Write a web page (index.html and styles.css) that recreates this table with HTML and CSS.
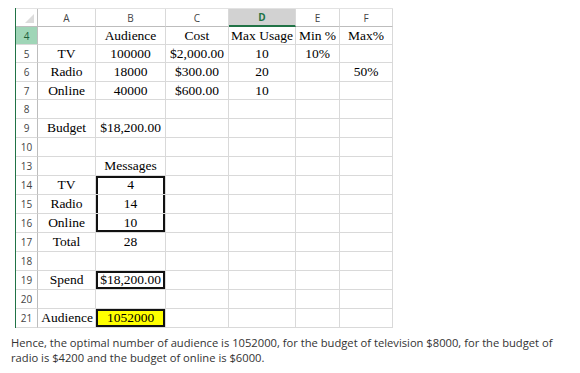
FILE: index.html
```html
<!DOCTYPE html>
<html>
<head>
<meta charset="utf-8">
<link rel="stylesheet" href="styles.css">
</head>
<body>
<div class="sheet">
  <div class="row hdr">
    <div class="c rh corner"><span class="tri"></span></div>
    <div class="c ca">A</div><div class="c cb">B</div><div class="c cc">C</div><div class="c cd sel">D</div><div class="c ce">E</div><div class="c cf">F</div>
  </div>
  <div class="row h18">
    <div class="c rh rsel">4</div>
    <div class="c ca"></div><div class="c cb">Audience</div><div class="c cc">Cost</div><div class="c cd">Max Usage</div><div class="c ce">Min %</div><div class="c cf">Max%</div>
  </div>
  <div class="row h18">
    <div class="c rh">5</div>
    <div class="c ca">TV</div><div class="c cb">100000</div><div class="c cc">$2,000.00</div><div class="c cd">10</div><div class="c ce">10%</div><div class="c cf"></div>
  </div>
  <div class="row">
    <div class="c rh">6</div>
    <div class="c ca">Radio</div><div class="c cb">18000</div><div class="c cc">$300.00</div><div class="c cd">20</div><div class="c ce"></div><div class="c cf">50%</div>
  </div>
  <div class="row h18">
    <div class="c rh">7</div>
    <div class="c ca">Online</div><div class="c cb">40000</div><div class="c cc">$600.00</div><div class="c cd">10</div><div class="c ce"></div><div class="c cf"></div>
  </div>
  <div class="row">
    <div class="c rh">8</div>
    <div class="c ca"></div><div class="c cb"></div><div class="c cc"></div><div class="c cd"></div><div class="c ce"></div><div class="c cf"></div>
  </div>
  <div class="row">
    <div class="c rh">9</div>
    <div class="c ca">Budget</div><div class="c cb">$18,200.00</div><div class="c cc"></div><div class="c cd"></div><div class="c ce"></div><div class="c cf"></div>
  </div>
  <div class="row">
    <div class="c rh">10</div>
    <div class="c ca"></div><div class="c cb"></div><div class="c cc"></div><div class="c cd"></div><div class="c ce"></div><div class="c cf"></div>
  </div>
  <div class="row">
    <div class="c rh">13</div>
    <div class="c ca"></div><div class="c cb">Messages</div><div class="c cc"></div><div class="c cd"></div><div class="c ce"></div><div class="c cf"></div>
  </div>
  <div class="row">
    <div class="c rh">14</div>
    <div class="c ca">TV</div><div class="c cb bx-top">4</div><div class="c cc"></div><div class="c cd"></div><div class="c ce"></div><div class="c cf"></div>
  </div>
  <div class="row">
    <div class="c rh">15</div>
    <div class="c ca">Radio</div><div class="c cb bx-mid">14</div><div class="c cc"></div><div class="c cd"></div><div class="c ce"></div><div class="c cf"></div>
  </div>
  <div class="row">
    <div class="c rh">16</div>
    <div class="c ca">Online</div><div class="c cb bx-bot">10</div><div class="c cc"></div><div class="c cd"></div><div class="c ce"></div><div class="c cf"></div>
  </div>
  <div class="row">
    <div class="c rh">17</div>
    <div class="c ca">Total</div><div class="c cb">28</div><div class="c cc"></div><div class="c cd"></div><div class="c ce"></div><div class="c cf"></div>
  </div>
  <div class="row">
    <div class="c rh">18</div>
    <div class="c ca"></div><div class="c cb"></div><div class="c cc"></div><div class="c cd"></div><div class="c ce"></div><div class="c cf"></div>
  </div>
  <div class="row">
    <div class="c rh">19</div>
    <div class="c ca">Spend</div><div class="c cb bx-all">$18,200.00</div><div class="c cc"></div><div class="c cd"></div><div class="c ce"></div><div class="c cf"></div>
  </div>
  <div class="row">
    <div class="c rh">20</div>
    <div class="c ca"></div><div class="c cb"></div><div class="c cc"></div><div class="c cd"></div><div class="c ce"></div><div class="c cf"></div>
  </div>
  <div class="row">
    <div class="c rh">21</div>
    <div class="c ca ovf">Audience</div><div class="c cb bx-all yellow">1052000</div><div class="c cc"></div><div class="c cd"></div><div class="c ce"></div><div class="c cf"></div>
  </div>
</div>
<p class="note">Hence, the optimal number of audience is 1052000, for the budget of television $8000, for the budget of radio is $4200 and the budget of online is $6000.</p>
</body>
</html>
```
FILE: styles.css
```css
html, body {
  margin: 0;
  padding: 0;
  background: #fff;
}
.sheet {
  margin: 8px 0 0 15px;
  width: 378px;
  border-left: 1px solid #217346;
  box-sizing: border-box;
}
.row {
  display: flex;
  height: 19px;
}
.row.h18 { height: 18px; }
.row.hdr {
  height: 18px;
  border-top: 1px solid #e2e2e2;
}
.c {
  box-sizing: border-box;
  border-right: 1px solid #d9d9d9;
  border-bottom: 1px solid #d9d9d9;
  display: flex;
  align-items: center;
  justify-content: center;
  font-family: "Liberation Serif", "Times New Roman", serif;
  font-size: 13.5px;
  color: #000;
  white-space: nowrap;
  overflow: visible;
}
.rh {
  width: 22px;
  font-family: "Open Sans", "Liberation Sans", sans-serif;
  font-size: 10px;
  color: #444;
  border-right-color: #bdbdbd;
}
.ca { width: 58px; }
.cb { width: 70px; }
.cc { width: 63px; }
.cd { width: 67px; }
.ce { width: 44px; }
.cf { width: 53px; }
.hdr .c {
  font-family: "Open Sans", "Liberation Sans", sans-serif;
  font-size: 10px;
  color: #444;
  border-bottom-color: #bdbdbd;
}
.hdr .sel {
  background: #d2d2d2;
  color: #217346;
  font-weight: bold;
  border-bottom: 2px solid #217346;
}
.hdr .corner {
  justify-content: flex-end;
  align-items: flex-end;
  padding: 0 3px 3px 0;
}
.tri {
  width: 0;
  height: 0;
  border-left: 9px solid transparent;
  border-bottom: 9px solid #dcdcdc;
}
.rsel {
  background: #9fd5b7;
  color: #1e5e3a;
}
.ovf {
  justify-content: flex-end;
  padding-right: 2px;
}
.bx-top { box-shadow: inset 2px 0 0 #111, inset -2px 0 0 #111, inset 0 2px 0 #111; }
.bx-mid { box-shadow: inset 2px 0 0 #111, inset -2px 0 0 #111; }
.bx-bot { box-shadow: inset 2px 0 0 #111, inset -2px 0 0 #111, inset 0 -2px 0 #111; }
.bx-all { box-shadow: inset 0 0 0 2px #111; }
.yellow { background: #ffff00; }
.note {
  margin: 7px 0 0 11px;
  width: 545px;
  font-family: "Open Sans", "Liberation Sans", sans-serif;
  font-size: 11.2px;
  line-height: 15px;
  color: #333;
}
```
